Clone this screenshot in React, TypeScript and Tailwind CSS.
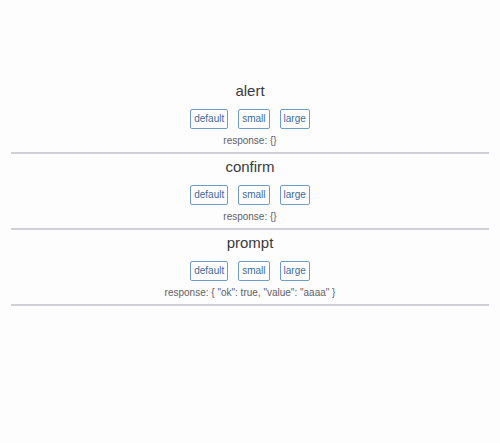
import React, { useState } from 'react';

type Kind = 'alert' | 'confirm' | 'prompt';

const sections: { kind: Kind; response: string }[] = [
  { kind: 'alert', response: '{}' },
  { kind: 'confirm', response: '{}' },
  { kind: 'prompt', response: '{ "ok": true, "value": "aaaa" }' },
];

const sizes = ['default', 'small', 'large'];

const DialogSection: React.FC<{ kind: Kind; response: string }> = ({ kind, response }) => {
  const [last, setLast] = useState(response);

  return (
    <div className="flex flex-col items-center border-b-2 border-[#cfcfd6] pt-[3px] pb-[4px]">
      <h2 className="text-[15px] leading-[20px] text-[#3a3a3c]">{kind}</h2>
      <div className="mt-[8px] flex gap-[10px]">
        {sizes.map((s) => (
          <button
            key={s}
            type="button"
            onClick={() => setLast(last)}
            className="h-[20px] px-[3px] border border-[#6f9bc9] rounded-[2px] bg-white text-[10px] leading-[18px] text-[#3b6a9c]"
          >
            {s}
          </button>
        ))}
      </div>
      <p className="mt-[5px] text-[10px] leading-[14px] text-[#5f5f63]">response: {last}</p>
    </div>
  );
};

export default function App() {
  return (
    <div
      className="min-h-[443px] bg-[#fdfdfe] px-[11px] pt-[78px]"
      style={{ fontFamily: '"Helvetica Neue", "Liberation Sans", Arial, sans-serif' }}
    >
      {sections.map((s) => (
        <DialogSection key={s.kind} kind={s.kind} response={s.response} />
      ))}
    </div>
  );
}
